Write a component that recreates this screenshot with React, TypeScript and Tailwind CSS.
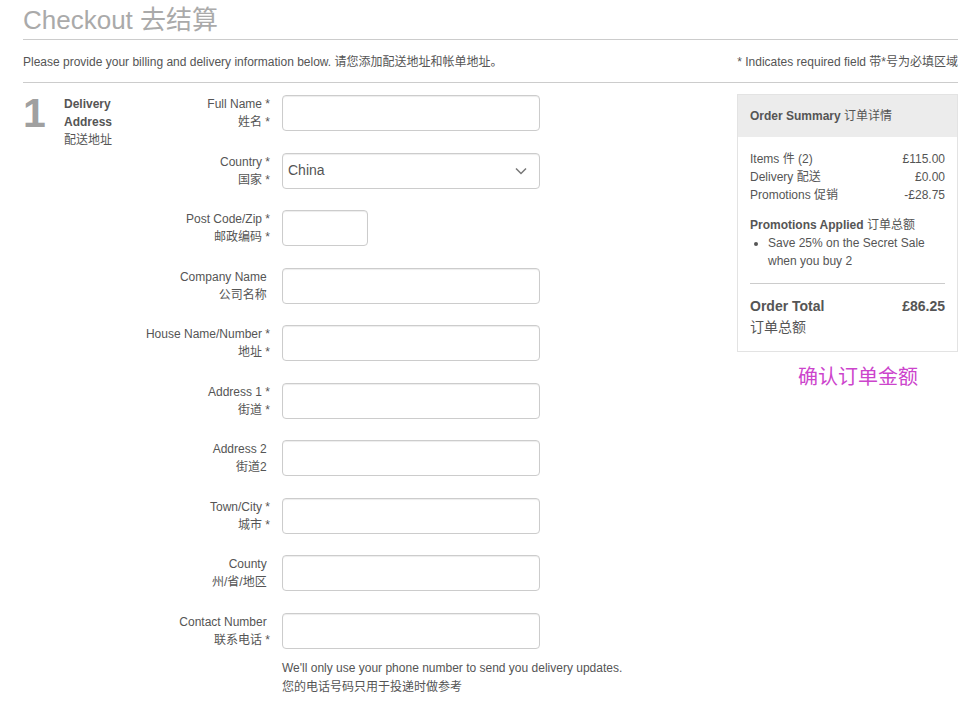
import React from "react";

type Field = {
  en: string;
  zh: string;
  width?: string;
  select?: boolean;
};

const fields: Field[] = [
  { en: "Full Name *", zh: "姓名 *" },
  { en: "Country *", zh: "国家 *", select: true },
  { en: "Post Code/Zip *", zh: "邮政编码 *", width: "w-[86px]" },
  { en: "Company Name\u00a0", zh: "公司名称\u00a0" },
  { en: "House Name/Number *", zh: "地址 *" },
  { en: "Address 1 *", zh: "街道 *" },
  { en: "Address 2\u00a0", zh: "街道2\u00a0" },
  { en: "Town/City *", zh: "城市 *" },
  { en: "County\u00a0", zh: "州/省/地区\u00a0" },
  { en: "Contact Number\u00a0", zh: "联系电话 *" },
];

const font = {
  fontFamily: '"Liberation Sans", Arial, "Noto Sans CJK SC", sans-serif',
};

const App: React.FC = () => {
  return (
    <div className="min-h-[702px] bg-white text-[#555]" style={font}>
      <div className="ml-[23px] w-[935px]">
        <h1 className="pt-[4px] pb-[3px] text-[26px] leading-[32px] text-[#aaa] border-b border-[#ccc]">
          Checkout 去结算
        </h1>

        <div className="flex justify-between pt-[13px] pb-[11px] text-[12px] leading-[18px] border-b border-[#ccc] whitespace-nowrap">
          <span>Please provide your billing and delivery information below. 请您添加配送地址和帐单地址。</span>
          <span>* Indicates required field 带*号为必填区域</span>
        </div>

        <div className="flex pt-[11px]">
          <div className="flex flex-1">
            <div className="w-[41px] text-[41px] font-bold leading-[38px] text-[#a0a0a0]">1</div>
            <div className="w-[70px] pt-[1px] text-[12px] leading-[18px]">
              <div className="font-bold">Delivery</div>
              <div className="font-bold">Address</div>
              <div>配送地址</div>
            </div>

            <div className="flex flex-col gap-[21.5px] pt-[1px]">
              {fields.map((f) => (
                <div key={f.en} className="flex">
                  <div className="w-[136px] text-right text-[12px] leading-[18px] whitespace-pre">
                    <div>{f.en}</div>
                    <div>{f.zh}</div>
                  </div>
                  <div className="ml-[12px]">
                    {f.select ? (
                      <div className="flex h-[36px] w-[258px] items-center justify-between rounded-[4px] border border-[#ccc] pl-[5px] pr-[12px] text-[14px] text-[#555] shadow-[inset_0_1px_1px_rgba(0,0,0,0.075)]">
                        <span>China</span>
                        <svg width="12" height="8" viewBox="0 0 12 8" fill="none" stroke="#777" strokeWidth="1.5">
                          <path d="M1 1.5 6 6.5 11 1.5" />
                        </svg>
                      </div>
                    ) : (
                      <input
                        className={`block h-[36px] ${f.width ?? "w-[258px]"} rounded-[4px] border border-[#ccc] bg-white shadow-[inset_0_1px_1px_rgba(0,0,0,0.075)] outline-none`}
                      />
                    )}
                  </div>
                </div>
              ))}
              <div className="-mt-[11.5px] ml-[148px] text-[12px] leading-[19px]">
                <div>We'll only use your phone number to send you delivery updates.</div>
                <div>您的电话号码只用于投递时做参考</div>
              </div>
            </div>
          </div>

          <div className="w-[221px]">
            <div className="border border-[#e3e3e3]">
              <div className="flex h-[42px] items-center bg-[#ececec] px-[12px] text-[12px]">
                <span className="font-bold">Order Summary</span>
                <span>&nbsp;订单详情</span>
              </div>
              <div className="px-[12px] pt-[13px] pb-[13px] text-[12px] leading-[18px]">
                <div className="flex justify-between">
                  <span>Items 件 (2)</span>
                  <span>£115.00</span>
                </div>
                <div className="flex justify-between">
                  <span>Delivery 配送</span>
                  <span>£0.00</span>
                </div>
                <div className="flex justify-between">
                  <span>Promotions 促销</span>
                  <span>-£28.75</span>
                </div>
                <div className="mt-[12px]">
                  <span className="font-bold">Promotions Applied</span> 订单总额
                </div>
                <ul className="list-disc pl-[18px]">
                  <li>Save 25% on the Secret Sale when you buy 2</li>
                </ul>
                <div className="mt-[13px] border-t border-[#ccc] pt-[12px]">
                  <div className="flex justify-between text-[14px] font-bold leading-[20px]">
                    <span>Order Total</span>
                    <span>£86.25</span>
                  </div>
                  <div className="text-[14px] leading-[22px]">订单总额</div>
                </div>
              </div>
            </div>
            <div className="mt-[13px] ml-[61px] text-[20px] leading-[24px] text-[#cc44cc]">确认订单金额</div>
          </div>
        </div>
      </div>
    </div>
  );
};

export default App;
